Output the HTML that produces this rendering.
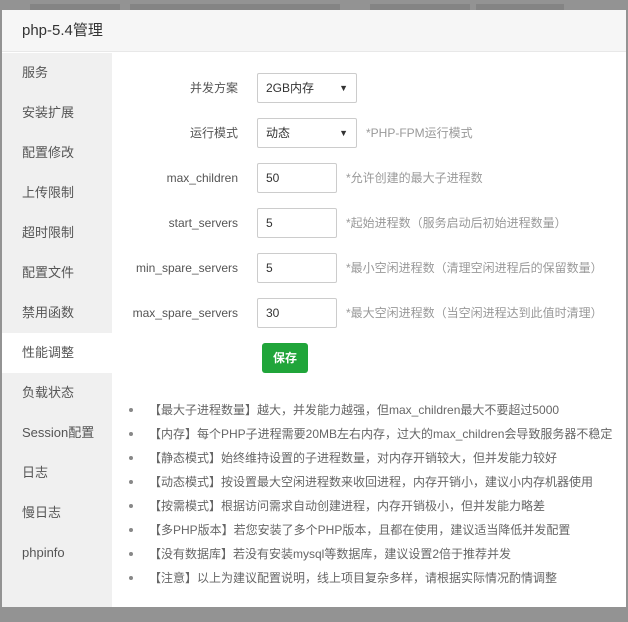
<!DOCTYPE html>
<html><head><meta charset="utf-8"><style>
*{margin:0;padding:0;box-sizing:border-box}
body{width:628px;height:622px;overflow:hidden;background:#939393;font-family:"Liberation Sans","Noto Sans CJK SC",sans-serif;position:relative}
.bar{position:absolute;top:4px;height:6px;background:#848484}
.modal{position:absolute;left:2px;top:10px;width:624px;height:597px;background:#fff;overflow:hidden}
.hd{height:42px;background:#f6f6f6;border-bottom:1px solid #e8e8e8;font-size:15px;color:#333;padding-left:20px;line-height:42px}
.side{position:absolute;left:0;top:43px;width:110px;bottom:0;background:#f0f0f0}
.side div{height:40px;line-height:40px;padding-left:20px;font-size:13px;color:#555}
.side div.on{background:#fff}
.row{position:absolute;left:110px;width:510px;height:30px;font-size:12px;color:#555;white-space:nowrap}
.lb{position:absolute;left:0;width:126px;text-align:right;line-height:30px}
.ip{position:absolute;left:145px;width:80px;height:30px;border:1px solid #ccc;border-radius:2px;line-height:28px;padding-left:8px;color:#333;font-size:12px}
.sel{width:100px}
.sel:after{content:"▼";position:absolute;right:8px;top:0;font-size:9px;color:#333}
.ht{position:absolute;line-height:30px;color:#999;font-size:12px;white-space:nowrap}
.btn{position:absolute;left:260px;top:333px;width:46px;height:30px;background:#20a53a;border-radius:3px;color:#fff;font-size:12px;font-weight:bold;text-align:center;line-height:30px}
ul{position:absolute;left:127px;top:390px;list-style:none;font-size:12px;color:#666;white-space:nowrap}
li{height:24px;line-height:20px;position:relative;padding-left:20px}
li:before{content:"";position:absolute;left:0;top:8px;width:4px;height:4px;border-radius:50%;background:#888}
</style></head><body>
<div class="bar" style="left:30px;width:90px"></div><div class="bar" style="left:130px;width:210px"></div><div class="bar" style="left:370px;width:100px"></div><div class="bar" style="left:476px;width:88px"></div>
<div class="modal">
<div class="hd">php-5.4管理</div>
<div class="side">
<div>服务</div><div>安装扩展</div><div>配置修改</div><div>上传限制</div><div>超时限制</div><div>配置文件</div><div>禁用函数</div><div class="on">性能调整</div><div>负载状态</div><div>Session配置</div><div>日志</div><div>慢日志</div><div>phpinfo</div>
</div>
<div class="row" style="top:63px"><span class="lb">并发方案</span><span class="ip sel">2GB内存</span></div>
<div class="row" style="top:108px"><span class="lb">运行模式</span><span class="ip sel">动态</span><span class="ht" style="left:254px">*PHP-FPM运行模式</span></div>
<div class="row" style="top:153px"><span class="lb">max_children</span><span class="ip">50</span><span class="ht" style="left:234px">*允许创建的最大子进程数</span></div>
<div class="row" style="top:198px"><span class="lb">start_servers</span><span class="ip">5</span><span class="ht" style="left:234px">*起始进程数（服务启动后初始进程数量）</span></div>
<div class="row" style="top:243px"><span class="lb">min_spare_servers</span><span class="ip">5</span><span class="ht" style="left:234px">*最小空闲进程数（清理空闲进程后的保留数量）</span></div>
<div class="row" style="top:288px"><span class="lb">max_spare_servers</span><span class="ip">30</span><span class="ht" style="left:234px">*最大空闲进程数（当空闲进程达到此值时清理）</span></div>
<div class="btn">保存</div>
<ul>
<li>【最大子进程数量】越大，并发能力越强，但max_children最大不要超过5000</li>
<li>【内存】每个PHP子进程需要20MB左右内存，过大的max_children会导致服务器不稳定</li>
<li>【静态模式】始终维持设置的子进程数量，对内存开销较大，但并发能力较好</li>
<li>【动态模式】按设置最大空闲进程数来收回进程，内存开销小，建议小内存机器使用</li>
<li>【按需模式】根据访问需求自动创建进程，内存开销极小，但并发能力略差</li>
<li>【多PHP版本】若您安装了多个PHP版本，且都在使用，建议适当降低并发配置</li>
<li>【没有数据库】若没有安装mysql等数据库，建议设置2倍于推荐并发</li>
<li>【注意】以上为建议配置说明，线上项目复杂多样，请根据实际情况酌情调整</li>
</ul>
</div>
</body></html>
